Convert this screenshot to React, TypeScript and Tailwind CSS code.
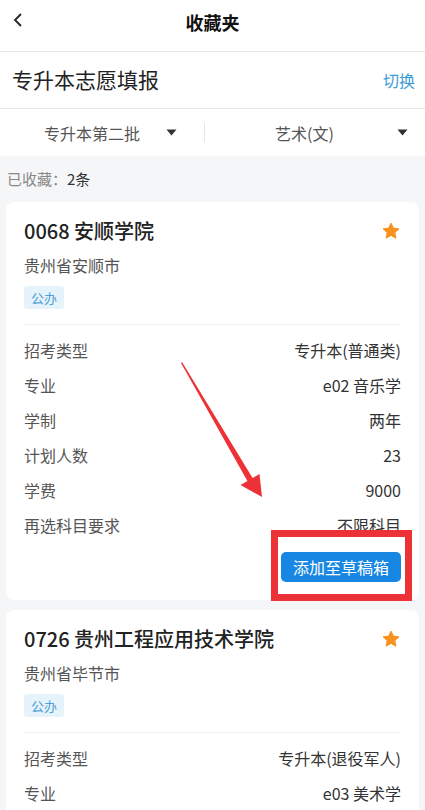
import React from "react";

type Row = { label: string; value: string };

type School = {
  title: string;
  location: string;
  tag: string;
  rows: Row[];
};

const schools: School[] = [
  {
    title: "0068 安顺学院",
    location: "贵州省安顺市",
    tag: "公办",
    rows: [
      { label: "招考类型", value: "专升本(普通类)" },
      { label: "专业", value: "e02 音乐学" },
      { label: "学制", value: "两年" },
      { label: "计划人数", value: "23" },
      { label: "学费", value: "9000" },
      { label: "再选科目要求", value: "不限科目" },
    ],
  },
  {
    title: "0726 贵州工程应用技术学院",
    location: "贵州省毕节市",
    tag: "公办",
    rows: [
      { label: "招考类型", value: "专升本(退役军人)" },
      { label: "专业", value: "e03 美术学" },
    ],
  },
];

function Star() {
  return (
    <svg width="20" height="20" viewBox="0 0 24 24">
      <path
        d="M12 2.5l2.9 6.1 6.6.8-4.9 4.6 1.3 6.6L12 17.3l-5.9 3.3 1.3-6.6-4.9-4.6 6.6-.8z"
        fill="#f7921e"
        stroke="#f7921e"
        strokeWidth="1.2"
        strokeLinejoin="round"
      />
    </svg>
  );
}

function Caret() {
  return (
    <svg width="11" height="7" viewBox="0 0 11 7">
      <path d="M0.5 0.5h10L5.5 6.5z" fill="#333" />
    </svg>
  );
}

function SchoolCard({ school, withButton }: { school: School; withButton: boolean }) {
  return (
    <article className="mx-[6px] rounded-[8px] bg-white px-[18px] pt-[15px] pb-[18px]">
      <div className="flex h-[28px] items-center justify-between">
        <h2 className="text-[20px] font-medium text-[#222]">{school.title}</h2>
        <Star />
      </div>
      <p className="mt-[9px] h-[22px] text-[16px] leading-[22px] text-[#555]">{school.location}</p>
      <span className="mt-[10px] inline-flex h-[23px] items-center rounded-[3px] bg-[#e6f3fb] px-[7px] text-[13px] text-[#4a9fd6]">
        {school.tag}
      </span>
      <div className="mt-[15px] border-t border-[#f1f1f1] pt-[7px]">
        {school.rows.map((row) => (
          <div key={row.label} className="flex h-[35px] items-center justify-between text-[16px]">
            <span className="text-[#555]">{row.label}</span>
            <span className="text-[#333]">{row.value}</span>
          </div>
        ))}
      </div>
      {withButton ? (
        <div className="mt-[10px] flex justify-end">
          <button className="h-[30px] rounded-[5px] bg-[#1787e3] px-[12px] text-[16px] text-white">
            添加至草稿箱
          </button>
        </div>
      ) : null}
    </article>
  );
}

export default function App() {
  return (
    <div
      className="relative h-[810px] w-[425px] overflow-hidden bg-[#f5f6f7]"
      style={{ fontFamily: '"Noto Sans CJK SC", "Noto Sans", sans-serif' }}
    >
      {/* Header */}
      <header className="relative flex h-[52px] items-start justify-center border-b border-[#e8e8e8] bg-white pt-[8px]">
        <svg className="absolute left-[12px] top-[13px]" width="12" height="14" viewBox="0 0 12 14">
          <path d="M9 1L3 7l6 6" fill="none" stroke="#222" strokeWidth="1.8" />
        </svg>
        <h1 className="text-[18px] font-bold leading-[28px] text-[#111]">收藏夹</h1>
      </header>

      <div className="flex h-[57px] items-center justify-between border-b border-[#e8e8e8] bg-white pl-[12px] pr-[10px]">
        <span className="text-[21px] text-[#222]">专升本志愿填报</span>
        <span className="text-[16px] text-[#3c9bd6]">切换</span>
      </div>

      {/* Filters */}
      <div className="flex h-[47px] items-center bg-white">
        <div className="flex flex-1 items-center justify-between pl-[44px] pr-[27px]">
          <span className="text-[16px] text-[#555]">专升本第二批</span>
          <Caret />
        </div>
        <div className="h-[19px] w-px bg-[#e6e6e6]" />
        <div className="flex flex-1 items-center justify-between pl-[70px] pr-[17px]">
          <span className="text-[16px] text-[#555]">艺术(文)</span>
          <Caret />
        </div>
      </div>

      <div className="flex h-[46px] items-center pl-[7px] text-[15px]">
        <span className="text-[#888]">已收藏：</span>
        <span className="text-[#333]">2条</span>
      </div>

      <div className="space-y-[10px]">
        {schools.map((school, index) => (
          <SchoolCard key={school.title} school={school} withButton={index === 0} />
        ))}
      </div>

      {/* Annotation overlays */}
      <div className="pointer-events-none absolute left-[271px] top-[530px] h-[71px] w-[141px] border-[7px] border-[#ec3237]" />
      <svg className="pointer-events-none absolute left-0 top-0" width="425" height="810">
        <polygon
          points="182,362 252.6,478 259.5,474 262,497 240.5,485 247.4,481 181,363"
          fill="#ec3237"
        />
      </svg>
    </div>
  );
}
